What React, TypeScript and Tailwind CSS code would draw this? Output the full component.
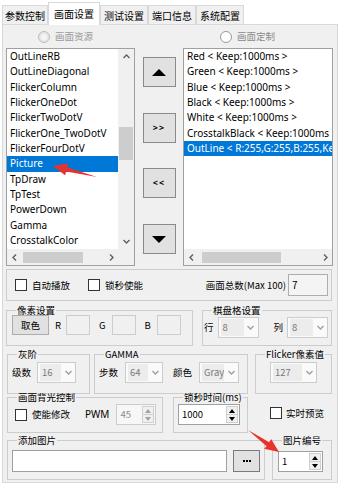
import React from "react";

const leftItems = [
  "OutLineRB",
  "OutLineDiagonal",
  "FlickerColumn",
  "FlickerOneDot",
  "FlickerTwoDotV",
  "FlickerOne_TwoDotV",
  "FlickerFourDotV",
  "Picture",
  "TpDraw",
  "TpTest",
  "PowerDown",
  "Gamma",
  "CrosstalkColor",
];

const rightItems = [
  "Red < Keep:1000ms >",
  "Green < Keep:1000ms >",
  "Blue < Keep:1000ms >",
  "Black < Keep:1000ms >",
  "White < Keep:1000ms >",
  "CrosstalkBlack < Keep:1000ms >",
  "OutLine < R:255,G:255,B:255,Keep:1000ms >",
];

const tabs = ["参数控制", "画面设置", "测试设置", "端口信息", "系统配置"];

function Chev({ dir, className }: { dir: "up" | "down" | "left" | "right"; className?: string }) {
  const pts = {
    up: "1.5,6 4.5,3 7.5,6",
    down: "1.5,3 4.5,6 7.5,3",
    left: "6,1.5 3,4.5 6,7.5",
    right: "3,1.5 6,4.5 3,7.5",
  }[dir];
  return (
    <svg width="9" height="9" viewBox="0 0 9 9" className={className}>
      <polyline points={pts} fill="none" stroke="currentColor" strokeWidth="1.4" />
    </svg>
  );
}

function Check() {
  return <span className="block w-[12px] h-[12px] border border-[#333333] bg-white shrink-0" />;
}

function Sel({ v, w }: { v: string; w: string }) {
  return (
    <div className={`h-[21px] border border-[#cccccc] bg-[#fafafa] flex items-center ${w}`}>
      <span className="flex-1 h-[17px] ml-[2px] pl-[2px] leading-[17px] bg-[#ececec] text-[#7a7a7a] whitespace-nowrap overflow-hidden">
        {v}
      </span>
      <span className="w-[14px] flex justify-center text-[#a0a0a0]">
        <Chev dir="down" />
      </span>
    </div>
  );
}

function Spin({ v, w, disabled }: { v: string; w: string; disabled?: boolean }) {
  const c = disabled ? "text-[#a0a0a0]" : "text-black";
  return (
    <div
      className={`flex h-[21px] border ${
        disabled ? "border-[#cccccc] bg-[#f7f7f7]" : "border-[#a0a0a0] bg-white"
      } ${w}`}
    >
      <span className={`flex-1 pl-[3px] leading-[19px] ${disabled ? "text-[#8a8a8a]" : "text-black"}`}>{v}</span>
      <div className="w-[12px] my-[1px] mr-[1px] flex flex-col border border-[#cfcfcf] bg-[#f0f0f0]">
        <span className={`flex-1 flex items-center justify-center border-b border-[#cfcfcf] ${c}`}>
          <svg width="6" height="4" viewBox="0 0 6 4">
            <polygon points="0,4 3,0 6,4" fill="currentColor" />
          </svg>
        </span>
        <span className={`flex-1 flex items-center justify-center ${c}`}>
          <svg width="6" height="4" viewBox="0 0 6 4">
            <polygon points="0,0 6,0 3,4" fill="currentColor" />
          </svg>
        </span>
      </div>
    </div>
  );
}

function Group({ title, w, h, children }: { title: string; w: string; h: string; children?: React.ReactNode }) {
  return (
    <fieldset className={`border border-[#cccccc] p-0 m-0 min-w-0 ${w} ${h}`}>
      <legend className="ml-[9px] px-[1px] leading-[12px] text-[9.5px]">{title}</legend>
      {children}
    </fieldset>
  );
}

function BigBtn({ children }: { children: React.ReactNode }) {
  return (
    <button className="w-[33px] h-[30px] border border-[#8a8a8a] bg-[#e1e1e1] flex items-center justify-center shrink-0">
      {children}
    </button>
  );
}

export default function App() {
  return (
    <div className="w-[340px] h-[483px] bg-white overflow-hidden relative text-[9.5px] text-black font-['Noto_Sans_CJK_SC','Noto_Sans',sans-serif]">
      {/* tabs */}
      <div className="flex items-end h-[24px] pl-[2px]">
        {tabs.map((t, i) =>
          i === 1 ? (
            <div
              key={t}
              className="w-[52px] h-[23px] bg-white border border-b-0 border-[#d9d9d9] flex items-center justify-center text-[10px] relative z-10 -mb-px pb-[1px]"
            >
              {t}
            </div>
          ) : (
            <div
              key={t}
              className={`${i === 0 ? "w-[46px]" : "w-[48px]"} h-[19px] bg-[#f0f0f0] border border-b-0 border-[#d9d9d9] flex items-center justify-center text-[10px]`}
            >
              {t}
            </div>
          )
        )}
      </div>

      {/* panel */}
      <div className="ml-[2px] w-[336px] h-[459px] border border-[#d9d9d9] bg-[#f0f0f0]">
        {/* radio row */}
        <div className="flex h-[23px] items-center">
          <div className="w-[185px] pl-[35px] flex items-center text-[#9a9a9a]">
            <span className="w-[12px] h-[12px] rounded-full border border-[#bcbcbc] bg-[#e6e6e6] flex items-center justify-center">
              <span className="w-[6px] h-[6px] rounded-full bg-[#f4f4f4]" />
            </span>
            <span className="ml-[5px]">画面资源</span>
          </div>
          <div className="pl-[32px] flex items-center text-[#8a8a8a]">
            <span className="w-[12px] h-[12px] rounded-full border border-[#9a9a9a] bg-white" />
            <span className="ml-[5px]">画面定制</span>
          </div>
        </div>

        {/* lists row */}
        <div className="flex h-[218px] pl-[3px]">
          {/* left list */}
          <div className="w-[129px] h-full border border-[#a0a0a0] bg-white flex flex-col font-['Noto_Sans',sans-serif] text-[10px]">
            <div className="flex h-[200px]">
              <div className="w-[111px] overflow-hidden">
                {leftItems.map((t) => (
                  <div
                    key={t}
                    className={`h-[15.33px] leading-[15.33px] pl-[3px] whitespace-nowrap ${
                      t === "Picture" ? "bg-[#0078d7] text-white" : ""
                    }`}
                  >
                    {t}
                  </div>
                ))}
              </div>
              <div className="w-[16px] bg-[#f0f0f0] flex flex-col">
                <div className="h-[15px] flex items-center justify-center text-[#606060]">
                  <Chev dir="up" />
                </div>
                <div className="flex-1">
                  <div className="mt-[63px] h-[33px] mx-[1px] bg-[#cdcdcd]" />
                </div>
                <div className="h-[15px] flex items-center justify-center text-[#606060]">
                  <Chev dir="down" />
                </div>
              </div>
            </div>
            <div className="flex flex-1 bg-[#f0f0f0]">
              <div className="w-[14px] flex items-center justify-center text-[#606060]">
                <Chev dir="left" />
              </div>
              <div className="w-[83px] flex items-center">
                <div className="ml-[2px] w-[60px] h-[11px] bg-[#cdcdcd]" />
              </div>
              <div className="w-[14px] flex items-center justify-center text-[#606060]">
                <Chev dir="right" />
              </div>
            </div>
          </div>

          {/* middle buttons */}
          <div className="w-[48px] flex flex-col items-center pt-[9px]">
            <BigBtn>
              <svg width="14" height="7" viewBox="0 0 14 7">
                <polygon points="0,7 7,0 14,7" fill="#000" />
              </svg>
            </BigBtn>
            <div className="mt-[26px]">
              <BigBtn>
                <span className="text-[9px] font-bold tracking-[1px] font-['Noto_Sans',sans-serif]">&gt;&gt;</span>
              </BigBtn>
            </div>
            <div className="mt-[25px]">
              <BigBtn>
                <span className="text-[9px] font-bold tracking-[1px] font-['Noto_Sans',sans-serif]">&lt;&lt;</span>
              </BigBtn>
            </div>
            <div className="mt-[26px]">
              <BigBtn>
                <svg width="14" height="7" viewBox="0 0 14 7">
                  <polygon points="0,0 14,0 7,7" fill="#000" />
                </svg>
              </BigBtn>
            </div>
          </div>

          {/* right list */}
          <div className="w-[150px] h-full border border-[#a0a0a0] bg-white flex flex-col font-['Noto_Sans',sans-serif] text-[10px]">
            <div className="h-[200px] overflow-hidden">
              {rightItems.map((t, i) => (
                <div
                  key={t}
                  className={`h-[15.33px] leading-[15.33px] pl-[3px] whitespace-nowrap overflow-hidden ${
                    i === rightItems.length - 1 ? "bg-[#0078d7] text-white" : ""
                  }`}
                >
                  {t}
                </div>
              ))}
            </div>
            <div className="flex flex-1 bg-[#f0f0f0]">
              <div className="w-[14px] flex items-center justify-center text-[#606060]">
                <Chev dir="left" />
              </div>
              <div className="flex-1 flex items-center">
                <div className="ml-[4px] w-[79px] h-[11px] bg-[#cdcdcd]" />
              </div>
              <div className="w-[14px] flex items-center justify-center text-[#606060]">
                <Chev dir="right" />
              </div>
            </div>
          </div>
        </div>

        {/* auto play row */}
        <div className="mt-[3px] ml-[3px] w-[326px] h-[32px] border border-[#cccccc] flex items-center pl-[8px] pr-[3px]">
          <Check />
          <span className="ml-[5px]">自动播放</span>
          <span className="ml-[18px]">
            <Check />
          </span>
          <span className="ml-[5px]">锁秒使能</span>
          <span className="ml-auto">画面总数(Max 100)</span>
          <div className="ml-[2px] w-[40px] h-[22px] border border-[#adadad] bg-[#f4f4f4] pl-[3px] leading-[20px] text-[10px]">
            7
          </div>
        </div>

        {/* pixel / checker row */}
        <div className="flex mt-[3px] pl-[3px]">
          <Group title="像素设置" w="w-[187px]" h="h-[42px]">
            <div className="flex items-start pl-[5px] -mt-[1px]">
              <button className="w-[37px] h-[20px] border border-[#adadad] bg-[#e1e1e1] text-[9.5px]">取色</button>
              <span className="ml-[6px] mt-[3px]">R</span>
              <span className="ml-[5px] w-[24px] h-[20px] border border-[#cccccc] bg-[#f0f0f0]" />
              <span className="ml-[9px] mt-[3px]">G</span>
              <span className="ml-[6px] w-[24px] h-[20px] border border-[#cccccc] bg-[#f0f0f0]" />
              <span className="ml-[9px] mt-[3px]">B</span>
              <span className="ml-[6px] w-[24px] h-[20px] border border-[#cccccc] bg-[#f0f0f0]" />
            </div>
          </Group>
          <div className="ml-[9px]">
            <Group title="棋盘格设置" w="w-[130px]" h="h-[42px]">
              <div className="flex items-center pl-[1px] mt-[1px]">
                <span>行</span>
                <span className="ml-[4px]">
                  <Sel v="8" w="w-[41px]" />
                </span>
                <span className="ml-[15px]">列</span>
                <span className="ml-[4px]">
                  <Sel v="8" w="w-[41px]" />
                </span>
              </div>
            </Group>
          </div>
        </div>

        {/* gray / gamma / flicker row */}
        <div className="flex mt-[2px] pl-[4px]">
          <Group title="灰阶" w="w-[83px]" h="h-[46px]">
            <div className="flex items-center pl-[4px] mt-[2px]">
              <span>级数</span>
              <span className="ml-[6px]">
                <Sel v="16" w="w-[39px]" />
              </span>
            </div>
          </Group>
          <div className="ml-[4px]">
            <Group title="GAMMA" w="w-[154px]" h="h-[46px]">
              <div className="flex items-center pl-[4px] mt-[2px]">
                <span>步数</span>
                <span className="ml-[7px]">
                  <Sel v="64" w="w-[38px]" />
                </span>
                <span className="ml-[10px]">颜色</span>
                <span className="ml-[7px]">
                  <Sel v="Gray" w="w-[40px]" />
                </span>
              </div>
            </Group>
          </div>
          <div className="ml-[7px]">
            <Group title="Flicker像素值" w="w-[77px]" h="h-[46px]">
              <div className="flex items-center pl-[14px] mt-[2px]">
                <Sel v="127" w="w-[47px]" />
              </div>
            </Group>
          </div>
        </div>

        {/* backlight / lock time row */}
        <div className="flex -mt-[3px] pl-[4px]">
          <Group title="画面背光控制" w="w-[156px]" h="h-[42px]">
            <div className="flex items-center pl-[7px] mt-[1px]">
              <Check />
              <span className="ml-[5px]">使能修改</span>
              <span className="ml-[15px] font-['Noto_Sans',sans-serif] text-[10px]">PWM</span>
              <span className="ml-[7px]">
                <Spin v="45" w="w-[40px]" disabled />
              </span>
            </div>
          </Group>
          <div className="ml-[10px]">
            <Group title="锁秒时间(ms)" w="w-[75px]" h="h-[42px]">
              <div className="flex items-center pl-[4px] mt-[1px]">
                <Spin v="1000" w="w-[62px]" />
              </div>
            </Group>
          </div>
          <div className="ml-[22px] mt-[16px] flex items-center h-[12px]">
            <Check />
            <span className="ml-[4px]">实时预览</span>
          </div>
        </div>

        {/* add picture row */}
        <div className="flex mt-[1px] pl-[4px]">
          <Group title="添加图片" w="w-[258px]" h="h-[46px]">
            <div className="flex items-center pl-[4px] mt-[4px]">
              <span className="w-[215px] h-[22px] border border-[#a0a0a0] bg-white" />
              <button className="ml-[6px] w-[27px] h-[22px] border border-[#7a7a7a] bg-[#e1e1e1] flex items-center justify-center gap-[1px]">
                <span className="w-[2px] h-[2px] bg-black" />
                <span className="w-[2px] h-[2px] bg-black" />
                <span className="w-[2px] h-[2px] bg-black" />
              </button>
            </div>
          </Group>
          <div className="ml-[7px]">
            <Group title="图片编号" w="w-[60px]" h="h-[46px]">
              <div className="flex items-center pl-[5px] mt-[5px]">
                <Spin v="1" w="w-[45px]" />
              </div>
            </Group>
          </div>
        </div>
      </div>

      {/* red annotation arrows */}
      <svg className="absolute left-0 top-0 pointer-events-none" width="340" height="483" viewBox="0 0 340 483">
        <polygon
          points="53,166 68,163.6 67,167.3 97,177 66.2,171.5 65.1,175.2"
          fill="#e8322b"
        />
        <polygon
          points="279,452 271.1,439 269.2,442.3 248,430 266.6,446.2 264.1,448.8"
          fill="#e8322b"
        />
      </svg>
    </div>
  );
}
